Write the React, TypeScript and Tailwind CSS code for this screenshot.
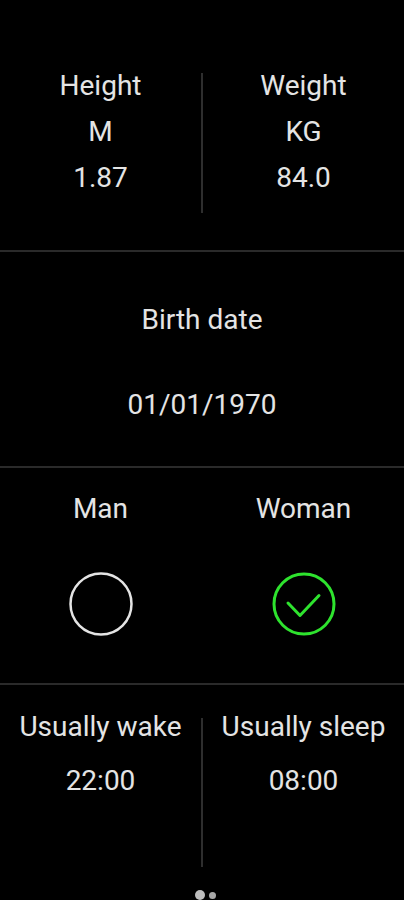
import React from "react";

const font = { fontFamily: "Roboto, 'Noto Sans', sans-serif" };

export default function App() {
  return (
    <div
      className="w-[404px] h-[900px] overflow-hidden bg-black text-[#e4e4e4] text-[28px] leading-[46px] flex flex-col"
      style={font}
    >
      {/* Height / Weight */}
      <div className="h-[250px] flex">
        <div className="flex-1 flex flex-col items-center pt-[63px]">
          <span>Height</span>
          <span>M</span>
          <span>1.87</span>
        </div>
        <div className="w-[2px] shrink-0 bg-[#2e2e2e] mt-[73px] h-[140px]" />
        <div className="flex-1 flex flex-col items-center pt-[63px]">
          <span>Weight</span>
          <span>KG</span>
          <span>84.0</span>
        </div>
      </div>
      <div className="h-[2px] bg-[#2a2a2a]" />

      {/* Birth date */}
      <div className="h-[214px] flex flex-col items-center pt-[45px]">
        <span>Birth date</span>
        <span className="mt-[39px]">01/01/1970</span>
      </div>
      <div className="h-[2px] bg-[#2a2a2a]" />

      {/* Gender */}
      <div className="h-[215px] flex">
        <div className="flex-1 flex flex-col items-center pt-[18px]">
          <span>Man</span>
          <svg width="64" height="64" viewBox="0 0 64 64" className="mt-[40px]">
            <circle cx="32" cy="32" r="30.5" fill="none" stroke="#e4e4e4" strokeWidth="2.5" />
          </svg>
        </div>
        <div className="w-[2px] shrink-0" />
        <div className="flex-1 flex flex-col items-center pt-[18px]">
          <span>Woman</span>
          <svg width="64" height="64" viewBox="0 0 64 64" className="mt-[40px]">
            <circle cx="32" cy="32" r="30" fill="none" stroke="#2ee32e" strokeWidth="3" />
            <polyline
              points="16,31 28,43.5 47,23.5"
              fill="none"
              stroke="#2ee32e"
              strokeWidth="3"
              strokeLinecap="round"
              strokeLinejoin="round"
            />
          </svg>
        </div>
      </div>
      <div className="h-[2px] bg-[#2a2a2a]" />

      {/* Wake / sleep */}
      <div className="h-[200px] flex">
        <div className="flex-1 flex flex-col items-center pt-[19px]">
          <span>Usually wake</span>
          <span className="mt-[8px]">22:00</span>
        </div>
        <div className="w-[2px] shrink-0 bg-[#2e2e2e] self-start mt-[33px] h-[149px]" />
        <div className="flex-1 flex flex-col items-center pt-[19px]">
          <span>Usually sleep</span>
          <span className="mt-[8px]">08:00</span>
        </div>
      </div>

      {/* Page dots */}
      <div className="flex justify-center items-center gap-[4px] pt-[5px] h-[15px] ml-[6px]">
        <div className="w-[10px] h-[10px] rounded-full bg-[#bdbdbd]" />
        <div className="w-[7px] h-[7px] rounded-full bg-[#a8a8a8]" />
      </div>
    </div>
  );
}
